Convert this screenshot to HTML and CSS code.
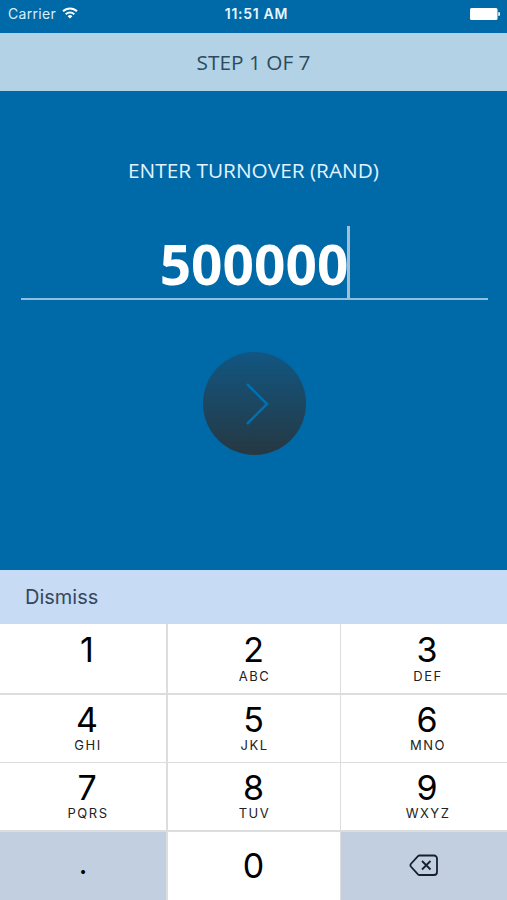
FILE: index.html
```html
<!DOCTYPE html>
<html lang="en">
<head>
    <meta charset="UTF-8">
    <meta name="viewport" content="width=device-width, initial-scale=1.0">
    <title>Turnover</title>
    <link rel="stylesheet" href="styles.css">
</head>
<body>
    <div class="status-bar">
        <div class="carrier">
            <span>Carrier</span>
            <svg class="wifi" width="16" height="12" viewBox="0 0 16 12" fill="none" stroke="#fff" stroke-width="2">
                <path d="M1 4.3a10 10 0 0 1 14 0"/>
                <path d="M3.7 7.2a6.2 6.2 0 0 1 8.6 0"/>
                <path d="M8 11.5L5.6 9.2a3.5 3.5 0 0 1 4.8 0z" fill="#fff" stroke="none"/>
            </svg>
        </div>
        <div class="time">11:51 AM</div>
        <div class="battery">
            <svg width="30" height="12" viewBox="0 0 30 12" fill="#fff">
                <rect x="0" y="0" width="27.5" height="12" rx="1.5"/>
                <path d="M28.3 4a2 2 0 0 1 0 4z"/>
            </svg>
        </div>
    </div>
    <div class="step">STEP 1 OF 7</div>
    <div class="content">
        <div class="label">ENTER TURNOVER (RAND)</div>
        <div class="field"><span class="value">500000</span><span class="caret"></span></div>
        <button class="next">
            <svg width="24" height="42" viewBox="0 0 24 42" fill="none" stroke="#0070b0" stroke-width="2.6">
                <path d="M2 1L22 21L2 41"/>
            </svg>
        </button>
    </div>
    <div class="toolbar">Dismiss</div>
    <div class="keypad">
        <button class="key left">1</button>
        <button class="key">2<span>ABC</span></button>
        <button class="key right">3<span>DEF</span></button>
        <button class="key low left">4<span>GHI</span></button>
        <button class="key low">5<span>JKL</span></button>
        <button class="key low right">6<span>MNO</span></button>
        <button class="key low left">7<span>PQRS</span></button>
        <button class="key low">8<span>TUV</span></button>
        <button class="key low right">9<span>WXYZ</span></button>
        <button class="key gray point">.</button>
        <button class="key zero">0</button>
        <button class="key gray">
            <svg width="30" height="23" viewBox="0 0 30 23" fill="none" stroke="#16202c" stroke-width="1.8" stroke-linejoin="round">
                <path d="M10.5 1.5H25a3 3 0 0 1 3 3V18a3 3 0 0 1-3 3H10.500Q9.700 21 9 20.300L1.800 12.500Q1 11.300 1.800 10L9 2.200Q9.700 1.500 10.500 1.500z"/>
                <path d="M13 7l8.500 8.500M21.500 7L13 15.500"/>
            </svg>
        </button>
    </div>
</body>
</html>
```

FILE: styles.css
```css
body {
    margin: 0;
    height: 900px;
    display: flex;
    flex-direction: column;
    background-color: #0069a7;
    font-family: 'Inter', sans-serif;
    overflow: hidden;
}

button {
    border: none;
    padding: 0;
    font-family: inherit;
}

svg {
    display: block;
}

.status-bar {
    height: 33px;
    box-sizing: border-box;
    padding: 0 7px 6px 8px;
    display: grid;
    grid-template-columns: 1fr auto 1fr;
    align-items: center;
    color: #fff;
    font-size: 14px;
}

.carrier {
    display: flex;
    align-items: center;
    gap: 6px;
    color: #d9efff;
    letter-spacing: 0.3px;
}

.wifi {
    margin-top: -2px;
}

.time {
    font-weight: 600;
    letter-spacing: 0.7px;
    padding-left: 5px;
    color: #e8f6ff;
}

.battery {
    justify-self: end;
}

.step {
    height: 58px;
    line-height: 59px;
    background-color: #b3d2e5;
    color: #2c4b5d;
    font-family: 'Open Sans', sans-serif;
    font-size: 20.8px;
    text-align: center;
}

.content {
    height: 479px;
    display: flex;
    flex-direction: column;
    align-items: center;
    font-family: 'Open Sans', sans-serif;
    color: #fff;
}

.label {
    margin-top: 64px;
    line-height: 30px;
    font-size: 20.8px;
    color: #e2f3ff;
}

.field {
    width: 467px;
    height: 72px;
    margin: 41px 0 0 1px;
    display: flex;
    justify-content: center;
    border-bottom: 2px solid #8fc0df;
}

.value {
    font-size: 55px;
    font-weight: bold;
    line-height: 75px;
    padding-left: 2px;
}

.caret {
    width: 3px;
    height: 73px;
    margin-left: -1px;
    background-color: #a5bfd2;
}

.next {
    width: 103px;
    height: 103px;
    margin: 52px 0 0 1px;
    border-radius: 50%;
    background: linear-gradient(#115682, #263842);
    display: flex;
    align-items: center;
    justify-content: center;
}

.next svg {
    margin-left: 5px;
}

.toolbar {
    height: 54px;
    line-height: 55px;
    padding-left: 25px;
    background-color: #c7dbf4;
    color: #35475e;
    font-size: 20px;
}

.keypad {
    flex: 1;
    display: grid;
    grid-template-columns: 166px 172px 1fr;
    grid-template-rows: 69px 67px 67px 1fr;
    gap: 1.5px;
    background-color: #dcddde;
}

.key {
    background-color: #fff;
    color: #000;
    font-size: 34px;
    line-height: 34px;
    display: flex;
    flex-direction: column;
    align-items: center;
    padding-top: 9px;
}

.key span {
    font-size: 13px;
    line-height: 16px;
    letter-spacing: 1.5px;
    margin-top: 1px;
    padding-left: 2px;
    color: #222;
}

.low {
    padding-top: 8px;
}

.low span {
    margin-top: 0;
}

.left {
    padding-left: 8px;
}

.right {
    padding-left: 6px;
}

.zero,
.gray {
    justify-content: center;
    padding: 0;
}

.gray {
    background-color: #c2cfe0;
}

.point {
    font-size: 30px;
    padding-bottom: 6px;
}
```
